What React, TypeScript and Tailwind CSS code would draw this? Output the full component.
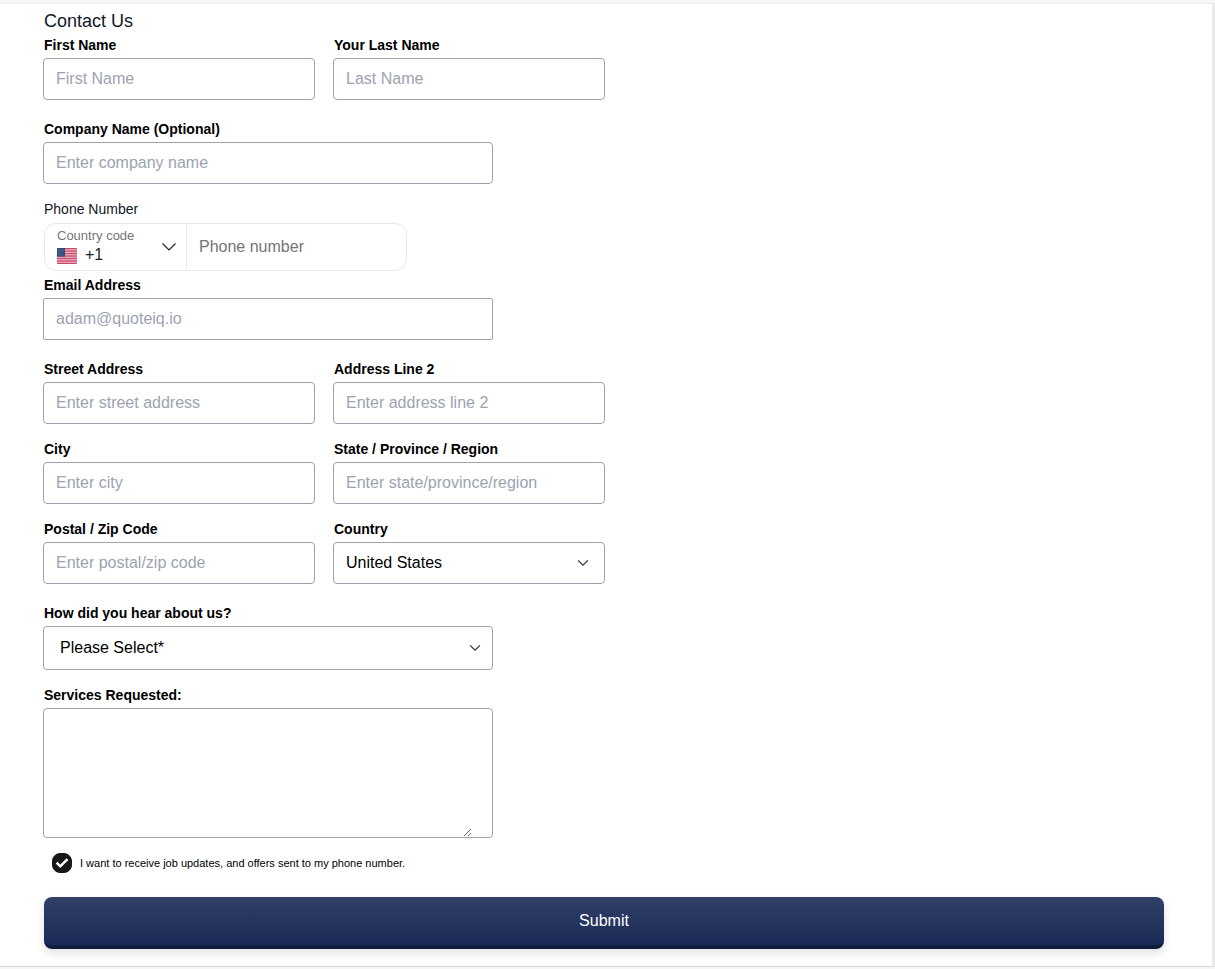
import type { InputHTMLAttributes, ReactNode } from 'react';
import clsx from 'clsx';

const labelClass = 'mb-[3px] block pl-px text-sm font-bold text-black';
const controlClass =
  'block h-[42px] w-full border border-[#9ca3af] bg-white text-base text-black placeholder:text-[#9ca3af]';

function Chevron({ size, stroke, className }: { size: number; stroke: number; className?: string }) {
  return (
    <svg
      width={size}
      height={size}
      viewBox="0 0 16 16"
      fill="none"
      stroke="currentColor"
      strokeWidth={stroke}
      aria-hidden="true"
      className={clsx('pointer-events-none absolute', className)}
    >
      <path d="M1.5 4.5 8 11l6.500-6.500" />
    </svg>
  );
}

interface TextFieldProps extends InputHTMLAttributes<HTMLInputElement> {
  id: string;
  label: string;
}

function TextField({ id, label, className = 'rounded', ...props }: TextFieldProps) {
  return (
    <div>
      <label htmlFor={id} className={labelClass}>
        {label}
      </label>
      <input id={id} name={id} className={clsx(controlClass, 'px-3', className)} {...props} />
    </div>
  );
}

interface SelectFieldProps {
  id: string;
  label: string;
  options: string[];
  className: string;
  chevronClass: string;
}

function SelectField({ id, label, options, className, chevronClass }: SelectFieldProps) {
  return (
    <div>
      <label htmlFor={id} className={labelClass}>
        {label}
      </label>
      <div className="relative">
        <select id={id} name={id} className={clsx(controlClass, 'appearance-none rounded', className)}>
          {options.map((option) => (
            <option key={option}>{option}</option>
          ))}
        </select>
        <Chevron size={12} stroke={1.6} className={clsx('inset-y-0 my-auto text-[#333]', chevronClass)} />
      </div>
    </div>
  );
}

function UsFlag() {
  return (
    <svg width="20" height="16" viewBox="0 0 20 16" aria-hidden="true" className="rounded-[1px]">
      <rect width="20" height="16" fill="#eeb9c6" />
      {[0, 1, 2, 3, 4, 5, 6].map((i) => (
        <rect key={i} y={i * 2.46} width="20" height="1.3" fill="#cb4a68" />
      ))}
      <rect width="8" height="8.6" fill="#2e4a78" />
      {[1.5, 3.8, 6.1].map((y) => (
        <path
          key={y}
          d={`M1 ${y}h.8M3.300 ${y}h.8M5.600 ${y}h.8M2.200 ${y + 1.1}h.8M4.500 ${y + 1.1}h.8`}
          stroke="#7d92b3"
          strokeWidth=".7"
        />
      ))}
    </svg>
  );
}

function PhoneField() {
  return (
    <div>
      <label htmlFor="phone" className="mb-1 block pl-px text-sm text-[#111827]">
        Phone Number
      </label>
      <div className="ml-px flex h-12 w-full max-w-[363px] rounded-xl border border-[#e5e7eb] bg-white">
        <div className="relative w-[142px] shrink-0 border-r border-[#e5e7eb]">
          <label htmlFor="dial-code" className="absolute top-1 left-3 text-[13px] leading-4 text-[#757575]">
            Country code
          </label>
          <div className="pointer-events-none absolute bottom-[6px] left-3">
            <UsFlag />
          </div>
          <select
            id="dial-code"
            name="dial-code"
            className="h-full w-full appearance-none bg-transparent pt-4 pl-10 text-base text-[#222]"
          >
            <option>+1</option>
          </select>
          <Chevron size={16} stroke={1.2} className="inset-y-0 right-[9px] my-auto text-[#222]" />
        </div>
        <input
          id="phone"
          name="phone"
          type="tel"
          placeholder="Phone number"
          className="min-w-0 flex-1 bg-transparent px-3 pb-px text-base placeholder:text-[#757575]"
        />
      </div>
    </div>
  );
}

function Columns({ children }: { children: ReactNode }) {
  return <div className="grid max-w-[562px] grid-cols-2 gap-x-[18px] gap-y-[15px]">{children}</div>;
}

export default function App() {
  return (
    <div className="border-b-2 border-[#f5f5f5] bg-white font-['Liberation_Sans',Arial,sans-serif]">
      <div className="h-[3px] bg-[#f5f5f5]" />
      <main className="border-t border-r-3 border-b border-t-[#ebebeb] border-r-[#ebebeb] border-b-[#d8d8d8] pt-[3px] pr-12 pb-[17px] pl-[43px]">
        <form onSubmit={(e) => e.preventDefault()}>
          <h1 className="pl-px text-lg leading-7 text-[#111827]">Contact Us</h1>
          <Columns>
            <TextField id="first-name" label="First Name" placeholder="First Name" />
            <TextField id="last-name" label="Your Last Name" placeholder="Last Name" />
          </Columns>

          <div className="mt-[19px] max-w-[450px]">
            <TextField id="company" label="Company Name (Optional)" placeholder="Enter company name" />
          </div>

          <div className="mt-[15px]">
            <PhoneField />
          </div>

          <div className="mt-1 mb-[19px] max-w-[450px]">
            <TextField
              id="email"
              label="Email Address"
              type="email"
              placeholder="adam@quoteiq.io"
              className="rounded-xs"
            />
          </div>

          <Columns>
            <TextField id="street" label="Street Address" placeholder="Enter street address" />
            <TextField id="address-2" label="Address Line 2" placeholder="Enter address line 2" />
            <TextField id="city" label="City" placeholder="Enter city" />
            <TextField id="state" label="State / Province / Region" placeholder="Enter state/province/region" />
            <TextField id="zip" label="Postal / Zip Code" placeholder="Enter postal/zip code" />
            <SelectField
              id="country"
              label="Country"
              options={['United States']}
              className="px-3"
              chevronClass="right-4"
            />
          </Columns>

          <div className="mt-[19px] max-w-[450px]">
            <SelectField
              id="referral"
              label="How did you hear about us?"
              options={['Please Select*']}
              className="h-[44px] px-4"
              chevronClass="right-3"
            />
          </div>

          <div className="mt-[15px] max-w-[450px]">
            <label htmlFor="services" className={labelClass}>
              Services Requested:
            </label>
            <div className="rounded border border-[#9ca3af] bg-white pr-5">
              <textarea
                id="services"
                name="services"
                className="block h-32 w-full resize-y px-3 py-2 text-base text-black outline-none"
              />
            </div>
          </div>

          <label className="mt-[15px] ml-[9px] flex items-center gap-2 text-[11px] leading-5 text-black">
            <span className="relative block h-5 w-5">
              <input
                type="checkbox"
                name="sms-updates"
                defaultChecked
                className="peer block h-5 w-5 appearance-none rounded-lg border border-[#171717] bg-white checked:bg-[#171717]"
              />
              <svg
                viewBox="0 0 20 20"
                fill="none"
                stroke="#fff"
                strokeWidth="2.5"
                aria-hidden="true"
                className="pointer-events-none absolute inset-0 hidden peer-checked:block"
              >
                <path d="M4.600 9.700 8.300 13.300 15.500 6.200" />
              </svg>
            </span>
            I want to receive job updates, and offers sent to my phone number.
          </label>

          <div className="mt-6 pl-px">
            <button
              type="submit"
              className="block h-[52px] w-full rounded-lg border-b-4 border-[#101d3d] bg-linear-to-b from-[#314067] to-[#1a2a56] text-base text-white shadow-[0_4px_10px_rgba(0,0,0,0.12)]"
            >
              Submit
            </button>
          </div>
        </form>
      </main>
    </div>
  );
}
